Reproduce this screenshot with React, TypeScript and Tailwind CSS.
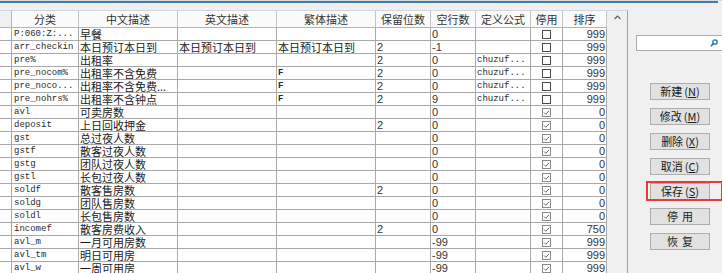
import type { ReactNode } from "react";

type Row = {
  code: string;
  cn: string;
  en?: string;
  tw?: string;
  digits?: string;
  blank: string;
  formula?: string;
  off: boolean;
  sort: string;
};

const rows: Row[] = [
  { code: "P:060:Z:...", cn: "早餐", blank: "0", off: false, sort: "999" },
  { code: "arr_checkin", cn: "本日预订本日到", en: "本日预订本日到", tw: "本日预订本日到", digits: "2", blank: "-1", off: false, sort: "999" },
  { code: "pre%", cn: "出租率", digits: "2", blank: "0", formula: "chuzuf...", off: false, sort: "999" },
  { code: "pre_nocom%", cn: "出租率不含免费", tw: "F", digits: "2", blank: "0", formula: "chuzuf...", off: false, sort: "999" },
  { code: "pre_noco...", cn: "出租率不含免费...", tw: "F", digits: "2", blank: "0", formula: "chuzuf...", off: false, sort: "999" },
  { code: "pre_nohrs%", cn: "出租率不含钟点", tw: "F", digits: "2", blank: "9", formula: "chuzuf...", off: false, sort: "999" },
  { code: "avl", cn: "可卖房数", blank: "0", off: true, sort: "0" },
  { code: "deposit", cn: "上日回收押金", digits: "2", blank: "0", off: true, sort: "0" },
  { code: "gst", cn: "总过夜人数", blank: "0", off: true, sort: "0" },
  { code: "gstf", cn: "散客过夜人数", blank: "0", off: true, sort: "0" },
  { code: "gstg", cn: "团队过夜人数", blank: "0", off: true, sort: "0" },
  { code: "gstl", cn: "长包过夜人数", blank: "0", off: true, sort: "0" },
  { code: "soldf", cn: "散客售房数", digits: "2", blank: "0", off: true, sort: "0" },
  { code: "soldg", cn: "团队售房数", blank: "0", off: true, sort: "0" },
  { code: "soldl", cn: "长包售房数", blank: "0", off: true, sort: "0" },
  { code: "incomef", cn: "散客房费收入", digits: "2", blank: "0", off: true, sort: "750" },
  { code: "avl_m", cn: "一月可用房数", blank: "-99", off: true, sort: "999" },
  { code: "avl_tm", cn: "明日可用房", blank: "-99", off: true, sort: "999" },
  { code: "avl_w", cn: "一周可用房", blank: "-99", off: true, sort: "999" }
];

const mono = "font-['Liberation_Mono',monospace] text-[9px] text-[#2a2a2a]";
const cjk = "font-['Noto_Sans_CJK_SC',sans-serif] text-[11px] text-[#1a1a1a]";
const num = "font-['Liberation_Sans',sans-serif] text-[11px] text-[#333]";

function Cell({ w, className = "", children }: { w: string; className?: string; children?: ReactNode }) {
  return (
    <div className={`${w} flex h-full shrink-0 items-center overflow-hidden whitespace-nowrap border-r border-[#a9a9a9] leading-[12px] ${className}`}>
      {children}
    </div>
  );
}

function Check({ on }: { on: boolean }) {
  if (!on) {
    return <div className="h-[9px] w-[9px] border border-[#4a4a4a] bg-white" />;
  }
  return (
    <svg width="9" height="9" viewBox="0 0 9 9">
      <rect x="0.5" y="0.5" width="8" height="8" fill="#fff" stroke="#8a8a8a" />
      <path d="M2 4.5 L3.8 6.3 L7 2.8" fill="none" stroke="#6b6b6b" strokeWidth="1" />
    </svg>
  );
}

const cols = [
  { w: "w-[67px]", label: "分类" },
  { w: "w-[99px]", label: "中文描述" },
  { w: "w-[99px]", label: "英文描述" },
  { w: "w-[99px]", label: "繁体描述" },
  { w: "w-[55px]", label: "保留位数" },
  { w: "w-[45px]", label: "空行数" },
  { w: "w-[55px]", label: "定义公式" },
  { w: "w-[32px]", label: "停用" },
  { w: "w-[44px]", label: "排序" }
];

function Btn({ label, k, spaced }: { label: string; k?: string; spaced?: boolean }) {
  return (
    <div className="flex h-[17px] w-[60px] items-center justify-center border border-[#adadad] bg-[#e1e1e1] font-['Noto_Sans_CJK_SC',sans-serif] text-[11px] leading-none text-[#1a1a1a]">
      <span className={spaced ? "tracking-[4px] pl-[4px]" : ""}>{label}</span>
      {k && (
        <span className="ml-[2px]">
          (<span className="underline">{k}</span>)
        </span>
      )}
    </div>
  );
}

export default function App() {
  return (
    <div className="h-[273px] w-[722px] overflow-hidden bg-[#f0f0f0]">
      <div className="h-[1px] w-full bg-[#dcdcdc]" />
      <div className="h-[2px] w-[718px] bg-[#3b7db3]" />
      <div className="flex h-[270px] pt-[7px]">
        <div className="w-[607px] shrink-0 bg-white">
          <div className="flex h-[18px] border-y border-[#b5b5b5] bg-[#fbfbfb] border-t-[#d5d5d5]">
            <div className="h-full w-[12px] shrink-0 border-r border-[#b5b5b5] bg-[#f0f0f0]" />
            {cols.map((c) => (
              <div
                key={c.label}
                className={`${c.w} flex h-full shrink-0 items-center justify-center border-r border-[#c5c5c5] font-['Noto_Sans_CJK_SC',sans-serif] text-[11px] leading-none text-[#333]`}
              >
                {c.label}
              </div>
            ))}
          </div>
          {rows.map((r) => (
            <div key={r.code} className="flex h-[13px] border-b border-[#a9a9a9]">
              <Cell w="w-[12px]" />
              <Cell w="w-[67px]" className={`pl-[2px] ${mono}`}>{r.code}</Cell>
              <Cell w="w-[99px]" className={`pl-[1px] ${cjk}`}>{r.cn}</Cell>
              <Cell w="w-[99px]" className={`pl-[1px] ${cjk}`}>{r.en}</Cell>
              <Cell w="w-[99px]" className={`pl-[1px] ${r.tw === "F" ? `${mono} font-bold` : cjk}`}>{r.tw}</Cell>
              <Cell w="w-[55px]" className={`pl-[1px] ${num}`}>{r.digits}</Cell>
              <Cell w="w-[45px]" className={`pl-[1px] ${num}`}>{r.blank}</Cell>
              <Cell w="w-[55px]" className={`pl-[1px] ${mono}`}>{r.formula}</Cell>
              <Cell w="w-[32px]" className="justify-center">
                <Check on={r.off} />
              </Cell>
              <Cell w="w-[44px]" className={`justify-end pr-[1px] ${num}`}>{r.sort}</Cell>
            </div>
          ))}
        </div>
        <div className="flex h-full w-[21px] shrink-0 justify-center border-r border-t border-[#a0a0a0] border-t-[#d5d5d5] bg-[#f0f0f0] pt-[4px]">
          <svg width="7" height="5" viewBox="0 0 7 5">
            <path d="M0.5 4 L3.5 1 L6.5 4" fill="none" stroke="#606060" strokeWidth="1.2" />
          </svg>
        </div>
        <div className="flex flex-1 flex-col">
          <div className="ml-[8px] mr-[-4px] mt-[25px] flex h-[16px] items-center justify-end border border-[#abadb3] bg-white pr-[7px]">
            <svg width="8" height="8" viewBox="0 0 8 8">
              <circle cx="5" cy="3" r="2.2" fill="none" stroke="#1f6fc0" strokeWidth="1.3" />
              <path d="M3.4 4.6 L0.8 7.2" stroke="#1f6fc0" strokeWidth="1.5" />
            </svg>
          </div>
          <div className="ml-[22px] mt-[32px] flex flex-col gap-[8px]">
            <Btn label="新建" k="N" />
            <Btn label="修改" k="M" />
            <Btn label="删除" k="X" />
            <Btn label="取消" k="C" />
            <div className="relative">
              <Btn label="保存" k="S" />
              <div className="absolute -bottom-[1px] -left-[4px] -right-[1px] -top-[2px] border-2 border-[#e53b3b]" />
            </div>
            <Btn label="停用" spaced />
            <Btn label="恢复" spaced />
          </div>
        </div>
      </div>
    </div>
  );
}
